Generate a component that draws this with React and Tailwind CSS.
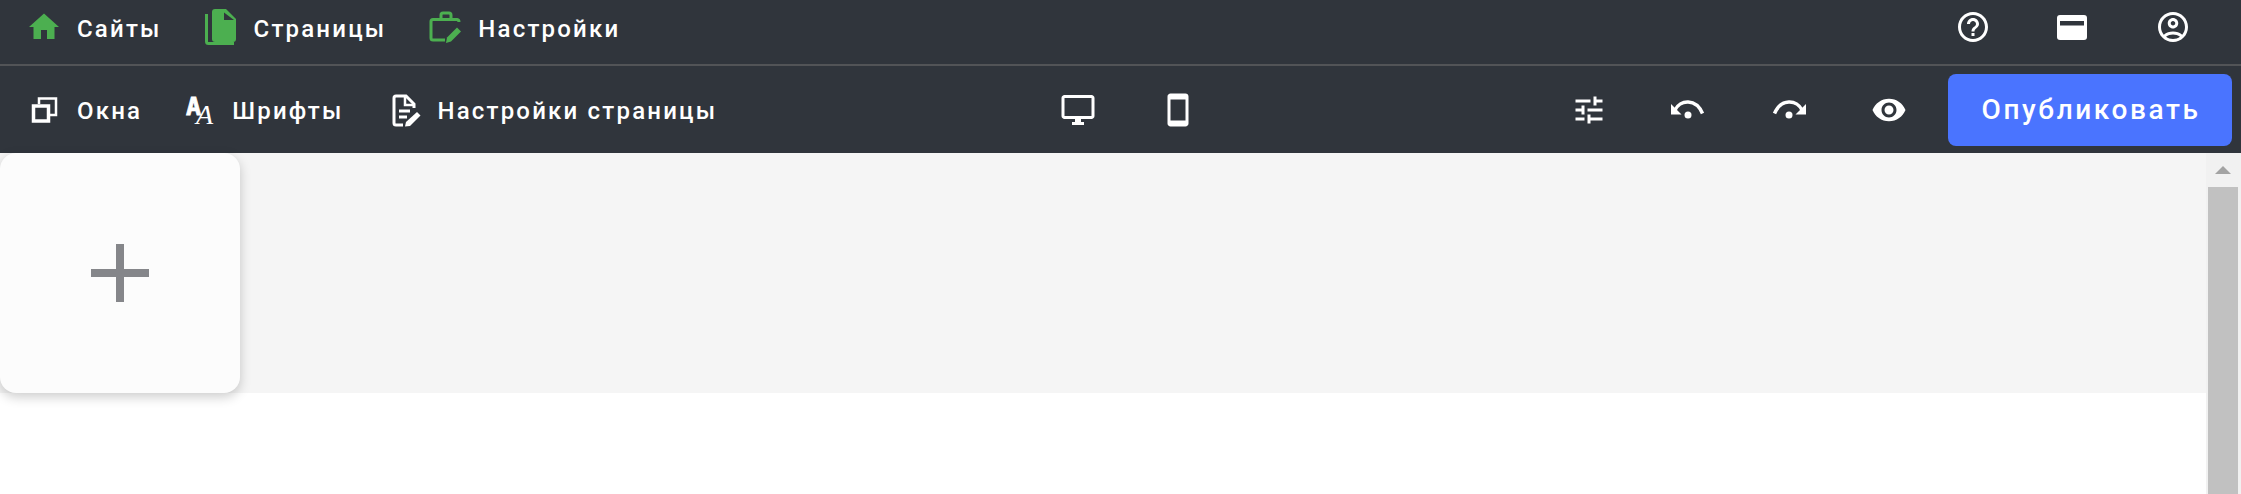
function Icon({ children, className = '', view = '0 0 24 24' }) {
  return (
    <svg viewBox={view} className={`w-9 h-9 shrink-0 overflow-visible fill-current ${className}`}>
      {children}
    </svg>
  );
}

function HomeIcon() {
  return (
    <Icon className="text-[#4caf50]">
      <path d="M10 20v-6h4v6h5v-8h3L12 3 2 12h3v8z" />
    </Icon>
  );
}

function PagesIcon() {
  return (
    <Icon view="0 0 36 36" className="text-[#4caf50]">
      <path d="M12 0H23L33 10V30a3 3 0 0 1-3 3H12a3 3 0 0 1-3-3V3a3 3 0 0 1 3-3z" />
      <path d="M21 3.500L31 11H21z" fill="#30353c" />
      <path d="M3.500 5V32.500a2 2 0 0 0 2 2H31" fill="none" stroke="currentColor" strokeWidth="3" />
    </Icon>
  );
}

function BagIcon() {
  return (
    <Icon view="0 0 36 36" className="text-[#4caf50]">
      <g fill="none" stroke="currentColor" strokeWidth="3">
        <path d="M14 10V6a2 2 0 0 1 2-2h6a2 2 0 0 1 2 2v4" />
        <path d="M32 13a2.500 2.500 0 0 0-2-2.500H6a2 2 0 0 0-2 2V29a2 2 0 0 0 2 2H18" />
      </g>
      <path d="M19 34l1-5.500L30 18.500l4 4L24 32.500z" />
    </Icon>
  );
}

function WindowsIcon() {
  return (
    <Icon view="0 0 36 36" className="text-white">
      <g fill="none" stroke="currentColor">
        <rect x="7.500" y="14" width="15" height="15" strokeWidth="3.500" />
        <path d="M13 12V6.500H30V23H24" strokeWidth="2.500" />
      </g>
    </Icon>
  );
}

function FontsIcon() {
  return (
    <Icon view="0 0 36 36" className="text-white">
      <text x="5" y="23" fontSize="25" fontWeight="700" stroke="white" strokeWidth="0.800" fontFamily='"DejaVu Sans Mono", monospace'>A</text>
      <text x="15" y="32" fontSize="28" fontStyle="italic" fontFamily='"Liberation Serif", serif'>A</text>
    </Icon>
  );
}

function DocEditIcon() {
  return (
    <Icon view="0 0 36 36" className="text-white translate-x-[2px]">
      <g fill="none" stroke="currentColor">
        <path d="M15 33H8a2 2 0 0 1-2-2V6a2 2 0 0 1 2-2H18L26 12V16" strokeWidth="3" />
        <path d="M17 4V13H26" strokeWidth="2.500" />
        <path d="M11 19H22" strokeWidth="3" />
        <path d="M11 25H19" strokeWidth="3" />
      </g>
      <path d="M17 34.500l1-4.500L29 20l3.500 3.500L22 34z" />
    </Icon>
  );
}

function UndoIcon({ className = '' }) {
  return (
    <svg viewBox="0 0 36 24" className={`w-9 h-6 shrink-0 fill-white ${className}`}>
      <path d="M1 6V16.500H11.500z" />
      <path d="M5 12C10 1.500 26 0 32.500 15.500" fill="none" stroke="white" strokeWidth="3.500" />
      <circle cx="18" cy="17" r="3.500" />
    </svg>
  );
}

function CardIcon() {
  return (
    <Icon view="0 0 36 36" className="text-white">
      <rect x="3" y="6" width="30" height="25" rx="3" />
      <rect x="6" y="12" width="24" height="4.500" fill="#30353c" />
    </Icon>
  );
}

function NavItem({ icon, label, className = '' }) {
  return (
    <div className={`flex items-center gap-[15px] ${className}`}>
      {icon}
      <span className="mt-[3px] text-2xl font-medium tracking-[2.2px] text-white whitespace-nowrap">{label}</span>
    </div>
  );
}

export default function App() {
  return (
    <div className="h-[494px] overflow-hidden bg-white flex flex-col font-['Roboto',sans-serif]">
      <header className="h-16 shrink-0 bg-[#30353c] flex items-center pl-[26px] pr-[50px] pb-[10px]">
        <div className="flex items-center gap-[41px]">
          <NavItem icon={<HomeIcon />} label="Сайты" />
          <NavItem icon={<PagesIcon />} label="Страницы" />
          <NavItem icon={<BagIcon />} label="Настройки" />
        </div>
        <div className="ml-auto flex items-center gap-[65px] text-white">
          <Icon className="translate-x-[2px]">
            <path d="M11 18h2v-2h-2v2zm1-16C6.480 2 2 6.480 2 12s4.480 10 10 10 10-4.480 10-10S17.520 2 12 2zm0 18c-4.410 0-8-3.590-8-8s3.590-8 8-8 8 3.590 8 8-3.590 8-8 8zm0-14c-2.210 0-4 1.790-4 4h2c0-1.100.9-2 2-2s2 .9 2 2c0 2-3 1.750-3 5h2c0-2.250 3-2.500 3-5 0-2.210-1.790-4-4-4z" />
          </Icon>
          <CardIcon />
          <Icon>
            <path d="M12 2C6.480 2 2 6.480 2 12s4.480 10 10 10 10-4.480 10-10S17.520 2 12 2zM7.350 18.500C8.660 17.560 10.260 17 12 17s3.340.56 4.650 1.500C15.340 19.440 13.740 20 12 20s-3.340-.56-4.650-1.500zm10.790-1.380C16.450 15.800 14.320 15 12 15s-4.450.8-6.140 2.120C4.700 15.730 4 13.950 4 12c0-4.420 3.580-8 8-8s8 3.580 8 8c0 1.950-.7 3.730-1.860 5.120z" />
            <path d="M12 6c-1.930 0-3.500 1.570-3.500 3.500S10.070 13 12 13s3.500-1.570 3.500-3.500S13.930 6 12 6zm0 5c-.83 0-1.500-.67-1.500-1.500S11.170 8 12 8s1.500.67 1.500 1.500S12.830 11 12 11z" />
          </Icon>
        </div>
      </header>
      <div className="h-[2px] shrink-0 bg-[#525457]" />
      <nav className="h-[87px] shrink-0 bg-[#30353c] flex items-center pl-[26px] pr-[9px]">
        <div className="flex items-center">
          <NavItem icon={<WindowsIcon />} label="Окна" />
          <NavItem icon={<FontsIcon />} label="Шрифты" className="ml-[39px]" />
          <NavItem icon={<DocEditIcon />} label="Настройки страницы" className="ml-[43px]" />
        </div>
        <div className="ml-[343px] flex items-center gap-16 text-white">
          <Icon>
            <path d="M21 2H3c-1.100 0-2 .9-2 2v12c0 1.100.9 2 2 2h7v2H8v2h8v-2h-2v-2h7c1.100 0 2-.9 2-2V4c0-1.100-.9-2-2-2zm0 14H3V4h18v12z" />
          </Icon>
          <Icon>
            <path d="M17 1.010L7 1c-1.100 0-2 .9-2 2v18c0 1.100.9 2 2 2h10c1.100 0 2-.9 2-2V3c0-1.100-.9-1.990-2-1.990zM17 19H7V5h10v14z" />
          </Icon>
        </div>
        <div className="ml-auto flex items-center text-white">
          <Icon>
            <path d="M3 17v2h6v-2H3zM3 5v2h10V5H3zm10 16v-2h8v-2h-8v-2h-2v6h2zM7 9v2H3v2h4v2h2V9H7zm14 4v-2H11v2h10zm-6-4h2V7h4V5h-4V3h-2v6z" />
          </Icon>
          <UndoIcon className="ml-[63px]" />
          <UndoIcon className="ml-[65px] -scale-x-100" />
          <Icon className="ml-[64px]">
            <path d="M12 4.500C7 4.500 2.730 7.610 1 12c1.730 4.390 6 7.500 11 7.500s9.270-3.110 11-7.500c-1.730-4.390-6-7.500-11-7.500zM12 17c-2.760 0-5-2.240-5-5s2.240-5 5-5 5 2.240 5 5-2.240 5-5 5zm0-8c-1.660 0-3 1.340-3 3s1.340 3 3 3 3-1.340 3-3-1.340-3-3-3z" />
          </Icon>
          <button className="ml-[41px] w-[284px] h-[72px] rounded-lg bg-[#4a74ff] text-white text-[28px] font-medium tracking-[2.6px] pl-[2px]">
            Опубликовать
          </button>
        </div>
      </nav>
      <main className="flex-1 flex min-h-0">
        <div className="flex-1">
          <div className="h-[240px] bg-[#f5f5f5]">
            <div className="w-60 h-60 rounded-2xl bg-[#fcfcfc] shadow-[0_4px_12px_rgba(0,0,0,0.2)] flex items-center justify-center">
              <svg viewBox="0 0 58 58" className="w-[58px] h-[58px] fill-[#85868a]">
                <rect x="25" y="0" width="8" height="58" />
                <rect x="0" y="25" width="58" height="8" />
              </svg>
            </div>
          </div>
        </div>
        <div className="w-[35px] shrink-0 bg-[#f1f1f1] flex flex-col items-start pl-[2px]">
          <div className="h-[34px] w-[30px] flex items-center justify-center">
            <svg viewBox="0 0 16 8" className="w-4 h-2 fill-[#a3a3a3]">
              <path d="M8 0L16 8H0z" />
            </svg>
          </div>
          <div className="flex-1 w-[30px] bg-[#c1c1c1]" />
        </div>
      </main>
    </div>
  );
}
